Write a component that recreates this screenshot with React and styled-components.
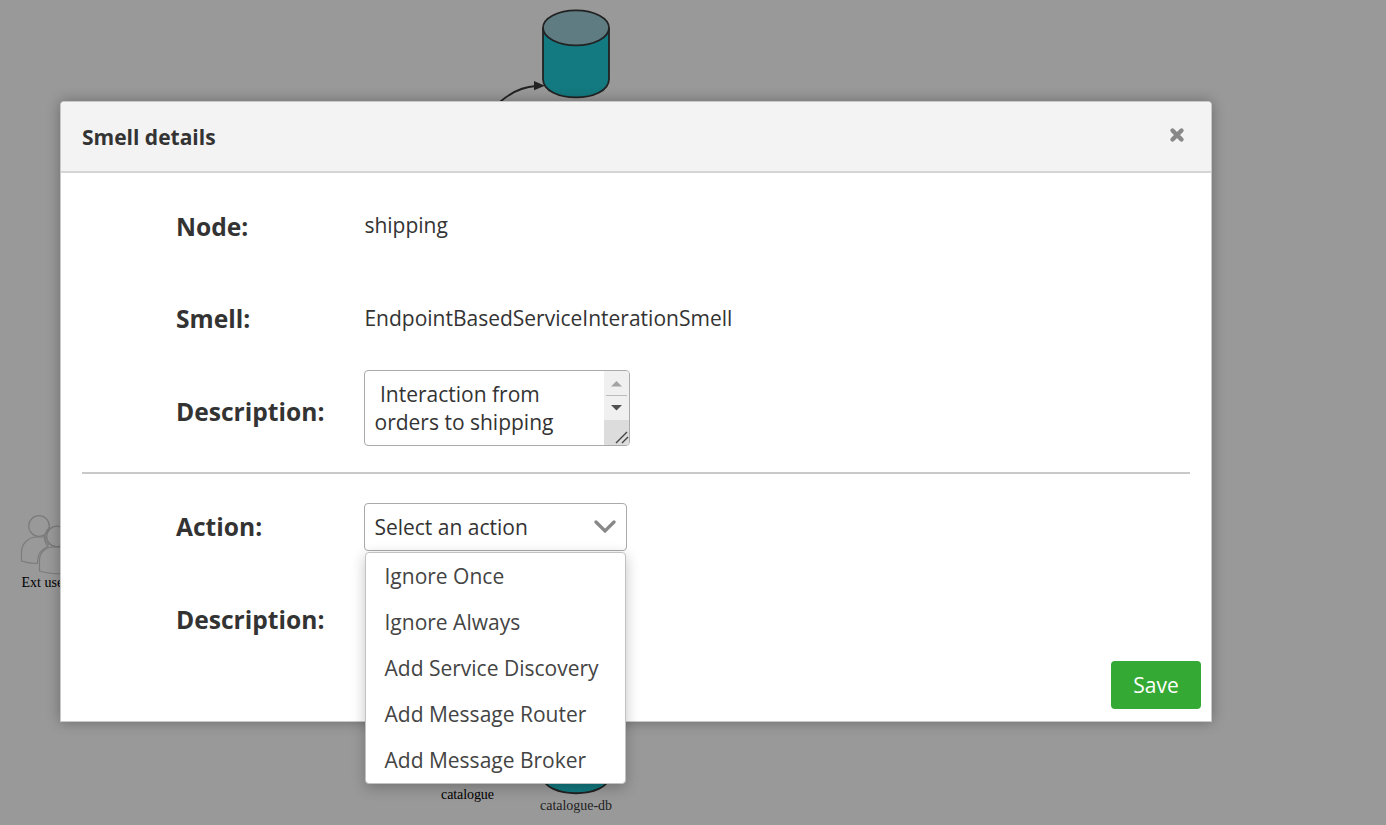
import React from "react";
import styled, { createGlobalStyle } from "styled-components";

const GlobalStyle = createGlobalStyle`
  * { box-sizing: border-box; }
  body {
    margin: 0;
    background: #999;
    color: #333;
    font-family: "Open Sans", "Noto Sans", sans-serif;
    font-size: 21px;
    overflow: hidden;
  }
`;

const Page = styled.main`
  position: relative;
  height: 825px;
  padding: 101px 174px 0 60px;
  overflow: hidden;
`;

const Diagram = styled.svg`
  position: absolute;
  inset: 0;
  font-family: "Liberation Serif", serif;
  font-size: 14px;
`;

const Dialog = styled.section`
  position: relative;
  height: 621px;
  border: 1px solid #c8c8c8;
  border-radius: 4px 4px 0 0;
  background: #fff;
  box-shadow: 0 0 14px rgba(0, 0, 0, 0.3);
`;

const Header = styled.header`
  display: flex;
  align-items: center;
  justify-content: space-between;
  height: 71px;
  padding: 0 26px 0 21px;
  border-bottom: 2px solid #d5d5d5;
  border-radius: 3px 3px 0 0;
  background: #f3f3f3;
`;

const Title = styled.h1`
  margin: 0;
  font-size: 21px;
  font-weight: 700;
  line-height: 30px;
`;

const CloseButton = styled.button`
  display: flex;
  padding: 0 0 3px;
  border: 0;
  background: none;
`;

const Body = styled.div`
  padding: 7px 21px 0;
`;

const Row = styled.div`
  display: grid;
  grid-template-columns: 188px 1fr;
  align-items: center;
  height: ${(p) => p.$height || 92}px;
  padding-left: 94px;
`;

const Label = styled.label`
  padding-top: 1px;
  font-size: 24.6px;
  font-weight: 700;
  line-height: 34px;
`;

const Value = styled.span`
  line-height: 30px;
  padding: 0 0 2px 0.4px;
`;

const Separator = styled.hr`
  height: 2px;
  margin: 15px 0 6px;
  border: 0;
  background: #c8c8c8;
`;

const TextBox = styled.div`
  display: flex;
  width: 266px;
  height: 76px;
  margin-bottom: 7px;
  border: 1px solid #aaa;
  border-radius: 4px;
  overflow: hidden;
`;

const TextContent = styled.div`
  flex: 1;
  padding: 9px 0 0 9.5px;
  line-height: 28px;
  white-space: pre;
`;

const ScrollBar = styled.div`
  width: 25px;
  background: #f0f0f0;
`;

const Field = styled.div`
  position: relative;
  width: 263px;
  padding-top: 1px;
`;

const SelectBox = styled.div`
  display: flex;
  align-items: center;
  justify-content: space-between;
  height: 48px;
  padding: 0 10px 0 9.4px;
  border: 1px solid #aaa;
  border-radius: 4px;
`;

const Menu = styled.ul`
  position: absolute;
  z-index: 2;
  top: 50px;
  left: 1px;
  width: 261px;
  height: 232px;
  margin: 0;
  padding: 0;
  list-style: none;
  border: 1px solid #c2c2c2;
  border-radius: 4px;
  background: #fff;
  color: #444;
  box-shadow: 0 4px 14px rgba(0, 0, 0, 0.24);
`;

const MenuItem = styled.li`
  height: 46px;
  padding-left: 18.5px;
  line-height: 46px;
  white-space: nowrap;
`;

const Footer = styled.footer`
  display: flex;
  justify-content: flex-end;
  margin-top: -5px;
  padding-right: 10px;
`;

const SaveButton = styled.button`
  width: 90px;
  height: 48px;
  padding: 0;
  border: 0;
  border-radius: 4px;
  background: #34a934;
  color: #fff;
  font: inherit;
`;

const actions = [
  "Ignore Once",
  "Ignore Always",
  "Add Service Discovery",
  "Add Message Router",
  "Add Message Broker",
];

function ServiceGraph() {
  return (
    <Diagram width="1386" height="825">
      <g stroke="#222" strokeWidth="1.8">
        <path d="M543 28V79C543 103.5 609 103.5 609 79V28" fill="#127a80" />
        <ellipse cx="576" cy="27.8" rx="33" ry="17.5" fill="#5f7c82" />
        <path d="M500 102Q517 87 536 86" fill="none" strokeWidth="1.9" />
        <path d="M534 81L545 85.7L534 90.3Z" fill="#222" stroke="none" />
        <path d="M543 740V776C543 799 609 799 609 776V740" fill="#127a80" />
      </g>
      <g fill="none" stroke="#7b7b7b" strokeWidth="1.2">
        <circle cx="39" cy="526" r="10.3" />
        <path d="M45 537H37C28 537 21.5 544 21.5 552V561Q29 563.5 37.5 563.5" />
        <path d="M37.5 563.5V562C37.5 554 41 549 48 546.5Q44 542 44.5 536.5" />
        <circle cx="57" cy="536.5" r="10.3" />
        <path d="M50 527Q43 533 46 541L49 545" />
        <path d="M39.5 571V560C39.5 552 46 547 54 547H66V574Q48 574 39.5 571Z" />
      </g>
      <text x="21.5" y="587" fill="#000">Ext user</text>
      <text x="441" y="799" fill="#000" textLength="53">catalogue</text>
      <text x="540" y="810" fill="#222" textLength="72">catalogue-db</text>
    </Diagram>
  );
}

export default function App() {
  return (
    <>
      <GlobalStyle />
      <Page>
        <ServiceGraph />
        <Dialog>
          <Header>
            <Title>Smell details</Title>
            <CloseButton aria-label="Close">
              <svg width="16" height="16" viewBox="0 0 16 16">
                <path d="M3.5 3.5L12.5 12.5M12.5 3.5L3.5 12.5" stroke="#888" strokeWidth="4.4" strokeLinecap="round" />
              </svg>
            </CloseButton>
          </Header>
          <Body>
            <Row>
              <Label>Node:</Label>
              <Value>shipping</Value>
            </Row>
            <Row $height={93}>
              <Label>Smell:</Label>
              <Value>EndpointBasedServiceInterationSmell</Value>
            </Row>
            <Row>
              <Label>Description:</Label>
              <TextBox>
                <TextContent>{" Interaction from\norders to shipping"}</TextContent>
                <ScrollBar>
                  <svg width="25" height="74" viewBox="0 0 25 74">
                    <path d="M7 15.5L12.5 10L18 15.5Z" fill="#a3a3a3" />
                    <path d="M2 24.5H23" stroke="#bbb" />
                    <path d="M7 34L12.5 39.5L18 34Z" fill="#505050" />
                    <rect y="49" width="25" height="25" fill="#dcdcdc" />
                    <path d="M12 72L23 61M18 72L24 66" stroke="#444" strokeWidth="1.4" />
                  </svg>
                </ScrollBar>
              </TextBox>
            </Row>
            <Separator />
            <Row>
              <Label>Action:</Label>
              <Field>
                <SelectBox>
                  Select an action
                  <svg width="22" height="16" viewBox="0 0 22 16">
                    <path d="M2 3L11 12L20 3" fill="none" stroke="#888" strokeWidth="3.3" strokeLinecap="round" />
                  </svg>
                </SelectBox>
                <Menu>
                  {actions.map((action) => (
                    <MenuItem key={action}>{action}</MenuItem>
                  ))}
                </Menu>
              </Field>
            </Row>
            <Row $height={94}>
              <Label>Description:</Label>
            </Row>
          </Body>
          <Footer>
            <SaveButton>Save</SaveButton>
          </Footer>
        </Dialog>
      </Page>
    </>
  );
}
